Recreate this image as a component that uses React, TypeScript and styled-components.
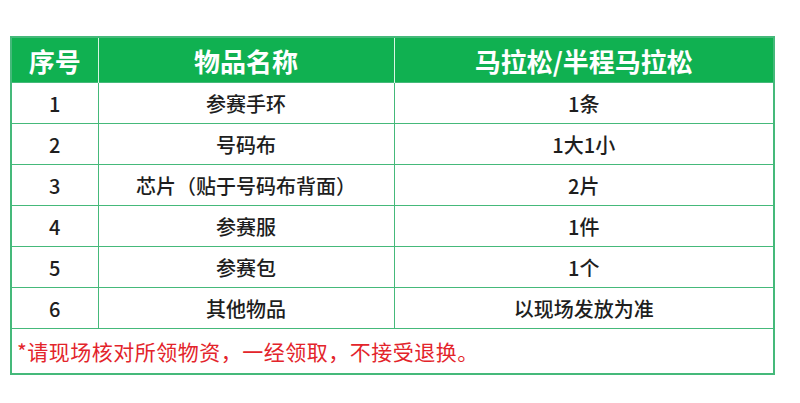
import React from 'react';
import styled, { createGlobalStyle } from 'styled-components';

const GlobalStyle = createGlobalStyle`
    body {
        margin: 0;
        background: #fff;
        font-family: "Noto Sans CJK SC", "Noto Sans", sans-serif;
    }
`

const items = [
    ['1', '参赛手环', '1条'],
    ['2', '号码布', '1大1小'],
    ['3', '芯片（贴于号码布背面）', '2片'],
    ['4', '参赛服', '1件'],
    ['5', '参赛包', '1个'],
    ['6', '其他物品', '以现场发放为准'],
];

export default function App() {
    return (
        <Page>
            <GlobalStyle />
            <Table>
                <colgroup>
                    <col style={{ width: 87 }} />
                    <col style={{ width: 296 }} />
                    <col />
                </colgroup>
                <thead>
                    <tr>
                        <Head>序号</Head>
                        <Head>物品名称</Head>
                        <Head>马拉松/半程马拉松</Head>
                    </tr>
                </thead>
                <tbody>
                    {items.map((row) => (
                        <Row key={row[0]}>
                            {row.map((cell, i) => (
                                <Cell key={i}>{cell}</Cell>
                            ))}
                        </Row>
                    ))}
                    <Row>
                        <Note colSpan={3}>*请现场核对所领物资，一经领取，不接受退换。</Note>
                    </Row>
                </tbody>
            </Table>
        </Page>
    )
}

const Page = styled.div`
    padding: 36px 0 0 10px;
`

const Table = styled.table`
    width: 765px;
    border-collapse: collapse;
    table-layout: fixed;
    border: 2px solid #45b97a;
`

const Head = styled.th`
    height: 44px;
    padding: 0;
    background: #10b151;
    color: #fff;
    font-size: 26px;
    font-weight: 700;
    text-align: center;
    border-left: 1px solid #d8f3e2;
    &:first-child {
        border-left: none;
    }
`

const Row = styled.tr`
    height: 41px;
    border-top: 1.5px solid #45b97a;
`

const Cell = styled.td`
    padding: 0;
    text-align: center;
    font-size: 20px;
    font-weight: 500;
    color: #1e1e1e;
    border-left: 1.5px solid #45b97a;
    &:first-child {
        border-left: none;
    }
`

const Note = styled.td`
    height: 44px;
    padding: 0 0 0 5px;
    font-size: 21px;
    font-weight: 400;
    letter-spacing: 0.5px;
    color: #e3242b;
`
